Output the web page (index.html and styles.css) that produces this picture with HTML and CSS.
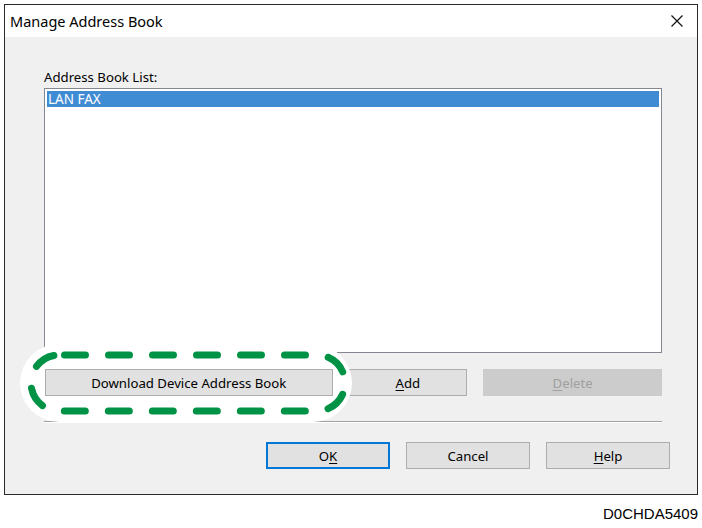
FILE: index.html
```html
<!DOCTYPE html>
<html>
<head>
<meta charset="utf-8">
<link rel="stylesheet" href="styles.css">
</head>
<body>
<div class="window">
  <div class="titlebar">
    <span class="title">Manage Address Book</span>
    <svg class="close" width="12" height="12" viewBox="0 0 12 12"><path d="M0.5 0.5L11.5 11.5M11.5 0.5L0.5 11.5" stroke="#111" stroke-width="1.2" fill="none"/></svg>
  </div>
  <div class="content">
    <div class="label">Address Book List:</div>
    <div class="listbox">
      <div class="item selected">LAN FAX</div>
    </div>
    <div class="row top-row">
      <button class="btn btn-download">Download Device Address Book</button>
      <button class="btn btn-add"><u>A</u>dd</button>
      <button class="btn btn-delete" disabled><u>D</u>elete</button>
    </div>
    <div class="separator"></div>
    <div class="row bottom-row">
      <button class="btn btn-ok">O<u>K</u></button>
      <button class="btn btn-cancel">Cancel</button>
      <button class="btn btn-help"><u>H</u>elp</button>
    </div>
  </div>
  <svg class="highlight" width="345" height="90" viewBox="0 0 345 90">
    <rect x="5" y="5" width="332" height="78" rx="39" ry="39" fill="#ffffff"/>
    <rect x="16" y="16" width="314" height="56" rx="28" ry="28" fill="none" stroke="#009245" stroke-width="7" stroke-linecap="round" stroke-dasharray="21 23" stroke-dashoffset="38.5"/>
  </svg>
</div>
<div class="caption">D0CHDA5409</div>
</body>
</html>
```
FILE: styles.css
```css
html, body {
  margin: 0;
  padding: 0;
  background: #ffffff;
}
body {
  width: 702px;
  height: 528px;
  font-family: "Noto Sans", "Open Sans", sans-serif;
  position: relative;
}
.window {
  position: relative;
  margin: 4px 0 0 4px;
  width: 692px;
  height: 489px;
  border: 1px solid #2b2b2b;
  background: #f0f0f0;
  display: flex;
  flex-direction: column;
}
.titlebar {
  height: 32px;
  background: #ffffff;
  display: flex;
  align-items: center;
  justify-content: space-between;
  padding: 0 14px 0 5px;
}
.title {
  font-size: 14.5px;
  color: #000;
}
.close {
  display: block;
  margin-top: -1px;
}
.content {
  flex: 1;
  display: flex;
  flex-direction: column;
  padding: 31px 0 0 39px;
}
.label {
  font-size: 13.2px;
  line-height: 18px;
  color: #000;
  height: 20px;
}
.listbox {
  border: 1px solid #828790;
  background: #ffffff;
  padding: 2px;
  box-sizing: content-box;
  width: 612px;
  height: 259px;
}
.item {
  height: 16px;
  line-height: 16px;
  font-size: 13.5px;
  padding-left: 1px;
}
.item.selected {
  background: #3f8bd4;
  color: #ffffff;
}
.row {
  display: flex;
}
.top-row {
  margin-top: 16px;
  gap: 16px;
  width: 618px;
}
.btn {
  font-family: "Noto Sans", "Open Sans", sans-serif;
  font-size: 13.2px;
  color: #000;
  background: #e1e1e1;
  border: 1px solid #adadad;
  height: 27px;
  padding: 2px 0 0 0;
  margin: 0;
  line-height: 1;
  box-sizing: border-box;
}
.btn u {
  text-underline-offset: 2px;
}
.btn-download {
  width: 288px;
  margin-left: 1px;
  position: relative;
  z-index: 2;
}
.btn-add {
  width: 119px;
}
.btn-delete {
  width: 179px;
  background: #cccccc;
  border-color: #cccccc;
  color: #a0a0a0;
}
.separator {
  margin-top: 25px;
  width: 618px;
  height: 1px;
  background: #a0a0a0;
  border-bottom: 1px solid #ffffff;
}
.bottom-row {
  margin-top: 19px;
  justify-content: flex-end;
  gap: 16px;
  padding-right: 27px;
}
.bottom-row .btn {
  width: 124px;
}
.btn-ok {
  border: 2px solid #0078d7;
}
.highlight {
  position: absolute;
  left: 10px;
  top: 334px;
  z-index: 1;
}
.caption {
  position: absolute;
  right: 4px;
  top: 505px;
  font-family: "Liberation Sans", Arial, sans-serif;
  font-size: 15px;
  color: #000;
}
```
